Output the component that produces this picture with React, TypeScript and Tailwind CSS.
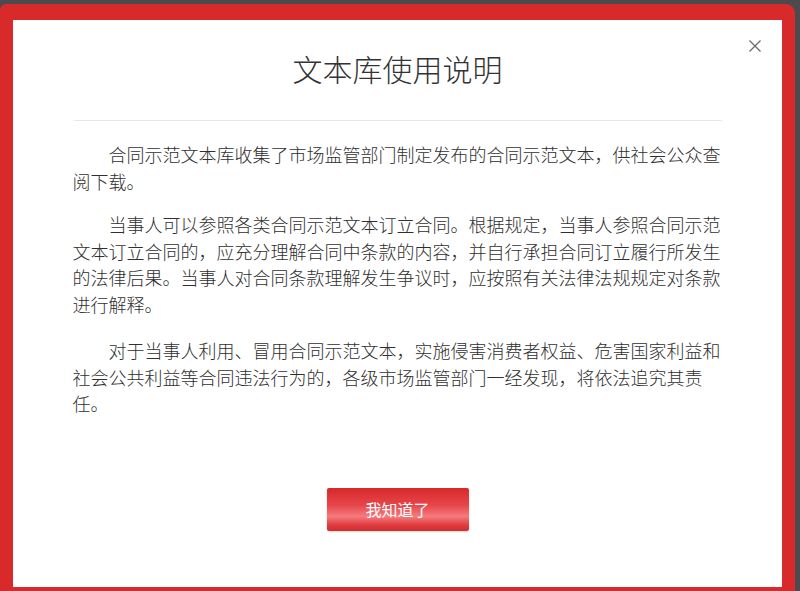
import React from "react";

const paras: { text: string; mb: string }[] = [
  {
    text: "合同示范文本库收集了市场监管部门制定发布的合同示范文本，供社会公众查阅下载。",
    mb: "mb-[17px]",
  },
  {
    text: "当事人可以参照各类合同示范文本订立合同。根据规定，当事人参照合同示范文本订立合同的，应充分理解合同中条款的内容，并自行承担合同订立履行所发生的法律后果。当事人对合同条款理解发生争议时，应按照有关法律法规规定对条款进行解释。",
    mb: "mb-[20px]",
  },
  {
    text: "对于当事人利用、冒用合同示范文本，实施侵害消费者权益、危害国家利益和社会公共利益等合同违法行为的，各级市场监管部门一经发现，将依法追究其责任。",
    mb: "mb-0",
  },
];

export default function App() {
  return (
    <div
      className="w-[800px] h-[591px] bg-[#4b4b4d] pt-[4px] pr-[5px] overflow-hidden"
      style={{ fontFamily: '"Noto Sans CJK SC", "Noto Sans", sans-serif' }}
    >
      <div className="h-[587px] bg-[#d8292b] rounded-tl-[6px] rounded-tr-[9px] pl-[13px] pr-[13px] pt-[16px] pb-[4px]">
        <div className="relative h-full bg-white flex flex-col items-center">
          <button className="absolute right-[20px] top-[19px] w-[14px] h-[14px] flex items-center justify-center">
            <svg width="14" height="14" viewBox="0 0 14 14">
              <path d="M1.5 1.5 L12.5 12.5 M12.5 1.5 L1.5 12.5" stroke="#666" strokeWidth="1.2" fill="none" />
            </svg>
          </button>
          <h1 className="mt-[28px] h-[40px] leading-[40px] text-[30px] font-light text-[#333]">
            文本库使用说明
          </h1>
          <div className="mt-[32px] w-[648px] h-px bg-[#e6e6e6]" />
          <div className="mt-[20px] w-[650px] pr-[2px] text-[18px] leading-[26.5px] font-light text-[#2f2f2f]">
            {paras.map((p, i) => (
              <p key={i} className={`indent-[36px] ${p.mb}`}>
                {p.text}
              </p>
            ))}
          </div>
          <button className="mt-[71px] w-[142px] h-[43px] rounded-[2px] bg-[linear-gradient(180deg,#d6282b_0%,#e7464a_40%,#f57b7e_66%,#e03c3f_86%,#d22b2e_100%)] text-white text-[16px] leading-[43px] shadow-[0_1px_2px_rgba(0,0,0,0.15)]">
            我知道了
          </button>
        </div>
      </div>
    </div>
  );
}
